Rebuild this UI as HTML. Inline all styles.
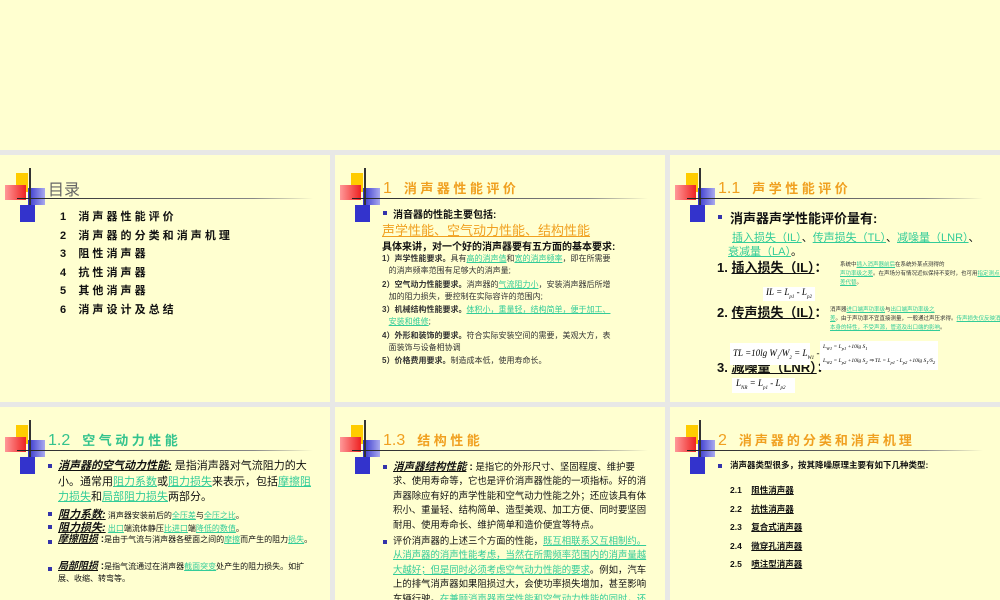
<!DOCTYPE html>
<html><head><meta charset="utf-8"><style>
*{margin:0;padding:0;box-sizing:border-box}
body{width:1000px;height:600px;overflow:hidden;background:#e8e8e6;position:relative;font-family:"Liberation Sans","Noto Sans CJK SC",sans-serif;color:#111}
.s{position:absolute;background:#ffffd0;overflow:hidden}
.a{position:absolute;white-space:nowrap}
.y{position:absolute;left:16px;top:18px;width:12px;height:19px;background:#ffcc00}
.r{position:absolute;left:5px;top:30px;width:21px;height:15px;background:linear-gradient(90deg,#ff9999,#ee2222)}
.b1{position:absolute;left:28px;top:33px;width:17px;height:17px;background:linear-gradient(90deg,#3333cc,#aaaaee)}
.b2{position:absolute;left:20px;top:50px;width:15px;height:17px;background:#3333cc}
.vl{position:absolute;left:29px;top:13px;width:2px;height:37px;background:#333}
.hl{position:absolute;left:17px;top:43px;width:296px;height:1px;background:linear-gradient(90deg,#222,#888 80%,rgba(0,0,0,0))}
.t{position:absolute;left:48px;top:23px;font-size:13px;white-space:nowrap;font-weight:bold;letter-spacing:3.5px}
.t .n{font-weight:normal;font-size:16px;letter-spacing:0;margin-right:12px}
.or{color:#f0a020}.gr{color:#33c38d}
.bu{position:absolute;width:4px;height:4px;background:#3333aa}
.g{color:#33cc99;text-decoration:underline}
.f{background:#fff;position:absolute;font-family:"Liberation Serif",serif;font-style:italic;color:#000;white-space:nowrap}
</style></head><body>
<div class="s" style="left:0;top:0;width:1000px;height:150px"></div>

<!-- slide 1 -->
<div class="s" style="left:0;top:155px;width:330px;height:247px">
<div class="y"></div><div class="r"></div><div class="b1"></div><div class="b2"></div><div class="vl"></div><div class="hl"></div>
<div class="t" style="color:#666;font-weight:normal;font-size:16px;top:21px;letter-spacing:0">目录</div>
<div style="position:absolute;left:60px;top:53px;font-size:11px;line-height:18.6px;font-weight:bold">
<div>1&nbsp;&nbsp;&nbsp; 消 声 器 性 能 评 价</div>
<div>2&nbsp;&nbsp;&nbsp; 消 声 器 的 分 类 和 消 声 机 理</div>
<div>3&nbsp;&nbsp;&nbsp; 阻 性 消 声 器</div>
<div>4&nbsp;&nbsp;&nbsp; 抗 性 消 声 器</div>
<div>5&nbsp;&nbsp;&nbsp; 其 他 消 声 器</div>
<div>6&nbsp;&nbsp;&nbsp; 消 声 设 计 及 总 结</div>
</div></div>

<!-- slide 2 -->
<div class="s" style="left:335px;top:155px;width:330px;height:247px">
<div class="y"></div><div class="r"></div><div class="b1"></div><div class="b2"></div><div class="vl"></div><div class="hl"></div>
<div class="t or"><span class="n">1</span>消声器性能评价</div>
<div class="bu" style="left:48px;top:56px"></div>
<div class="a" style="left:58px;top:51px;font-size:10px;font-weight:bold">消音器的性能主要包括:</div>
<div class="a or" style="left:47px;top:65px;font-size:13px;text-decoration:underline">声学性能、空气动力性能、结构性能</div>
<div class="a" style="left:47px;top:83px;font-size:10px;font-weight:bold">具体来讲，对一个好的消声器要有五方面的基本要求:</div>
<div style="position:absolute;left:47px;top:98px;width:265px;font-size:8px;line-height:12.3px;color:#333">
<div style="margin-bottom:1px"><b>1）声学性能要求。</b>具有<span class="g">高的消声值</span>和<span class="g">宽的消声频率</span>，即在所需要<br>&nbsp;&nbsp;&nbsp;的消声频率范围有足够大的消声量;</div>
<div style="margin-bottom:1px"><b>2）空气动力性能要求。</b>消声器的<span class="g">气流阻力小</span>，安装消声器后所增<br>&nbsp;&nbsp;&nbsp;加的阻力损失，要控制在实际容许的范围内;</div>
<div style="margin-bottom:1px"><b>3）机械结构性能要求。</b><span class="g">体积小，重量轻，结构简单，便于加工、</span><br>&nbsp;&nbsp;&nbsp;<span class="g">安装和维修</span>;</div>
<div style="margin-bottom:1px"><b>4）外形和装饰的要求。</b>符合实际安装空间的需要，美观大方，表<br>&nbsp;&nbsp;&nbsp;面装饰与设备相协调</div>
<div><b>5）价格费用要求。</b>制造成本低，使用寿命长。</div>
</div></div>

<!-- slide 3 -->
<div class="s" style="left:670px;top:155px;width:330px;height:247px">
<div class="y"></div><div class="r"></div><div class="b1"></div><div class="b2"></div><div class="vl"></div><div class="hl"></div>
<div class="t or"><span class="n">1.1</span>声学性能评价</div>
<div class="bu" style="left:48px;top:60px"></div>
<div class="a" style="left:60px;top:53px;font-size:13px;font-weight:bold">消声器声学性能评价量有:</div>
<div class="a" style="left:62px;top:74px;font-size:11px"><span class="g">插入损失（IL）</span>、<span class="g">传声损失（TL）</span>、<span class="g">减噪量（LNR）</span>、</div>
<div class="a" style="left:58px;top:88px;font-size:11px"><span class="g">衰减量（LA）</span>。</div>
<div class="a" style="left:47px;top:102px;font-size:13px;font-weight:bold">1. <u>插入损失（IL）</u>：</div>
<div class="a" style="left:170px;top:106px;font-size:5.5px;line-height:9px;color:#333">系统中<span class="g">插入消声器前后</span>在系统外某点测得的<br><span class="g">声功率级之差</span>。在声场分有情况近似保持不变时，也可用<span class="g">指定测点上声压级</span><br><span class="g">差代替</span>。</div>
<div class="f" style="left:93px;top:132px;width:52px;height:14px;font-size:9px;padding-left:3px">IL = L<sub style="font-size:5px">p1</sub> - L<sub style="font-size:5px">p2</sub></div>
<div class="a" style="left:47px;top:147px;font-size:13px;font-weight:bold">2. <u>传声损失（IL）</u>：</div>
<div class="a" style="left:160px;top:151px;font-size:5.5px;line-height:9px;color:#333">消声器<span class="g">进口端声功率级</span>与<span class="g">出口端声功率级之</span><br><span class="g">差</span>。由于声功率不宜直接测量，一般通过声压求得。<span class="g">传声损失仅反映消声器</span><br><span class="g">本身的特性，不受声源，管道及出口端的影响</span>。</div>
<div class="a" style="left:47px;top:202px;font-size:13px;font-weight:bold">3. <u>减噪量（LNR）</u>：</div>
<div class="f" style="left:60px;top:188px;width:80px;height:22px;font-size:9px;padding:5px 0 0 3px">TL =10lg W<sub style="font-size:5px">1</sub>/W<sub style="font-size:5px">2</sub> = L<sub style="font-size:5px">W1</sub> - L<sub style="font-size:5px">W2</sub></div>
<div class="f" style="left:150px;top:186px;width:118px;height:29px;font-size:5.5px;line-height:13px;padding-left:3px">L<sub>W1</sub> = L<sub>p1</sub> +10lg S<sub>1</sub><br>L<sub>W2</sub> = L<sub>p2</sub> +10lg S<sub>2</sub> ⇒ TL = L<sub>p1</sub> - L<sub>p2</sub> +10lg S<sub>1</sub>/S<sub>2</sub></div>
<div class="f" style="left:62px;top:223px;width:63px;height:15px;font-size:9px;padding-left:4px">L<sub style="font-size:5px">NR</sub> = L<sub style="font-size:5px">p1</sub> - L<sub style="font-size:5px">p2</sub></div>
</div>

<!-- slide 4 -->
<div class="s" style="left:0;top:407px;width:330px;height:193px">
<div class="y"></div><div class="r"></div><div class="b1"></div><div class="b2"></div><div class="vl"></div><div class="hl"></div>
<div class="t gr"><span class="n">1.2</span>空气动力性能</div>
<div class="bu" style="left:48px;top:57px"></div>
<div style="position:absolute;left:58px;top:52px;width:255px;font-size:11px;line-height:15.5px"><b><i><u>消声器的空气动力性能:</u></i></b> 是指消声器对气流阻力的大小。通常用<span class="g">阻力系数</span>或<span class="g">阻力损失</span>来表示，包括<span class="g">摩擦阻力损失</span>和<span class="g">局部阻力损失</span>两部分。</div>
<div class="bu" style="left:48px;top:105px"></div>
<div class="a" style="left:58px;top:99px;font-size:8px"><b style="font-size:11px"><i><u>阻力系数:</u></i></b> 消声器安装前后的<span class="g">全压差</span>与<span class="g">全压之比</span>。</div>
<div class="bu" style="left:48px;top:118px"></div>
<div class="a" style="left:58px;top:112px;font-size:8px"><b style="font-size:11px"><i><u>阻力损失:</u></i></b> <span class="g">出口</span>端流体静压<span class="g">比进口</span>端<span class="g">降低的数值</span>。</div>
<div class="bu" style="left:48px;top:133px"></div>
<div style="position:absolute;left:58px;top:127px;width:260px;font-size:8px;line-height:12px"><b style="font-size:10px"><i><u>摩擦阻损</u></i> :</b>是由于气流与消声器各壁面之间的<span class="g">摩擦</span>而产生的阻力<span class="g">损失</span>。</div>
<div class="bu" style="left:48px;top:160px"></div>
<div style="position:absolute;left:58px;top:154px;width:260px;font-size:8px;line-height:12px"><b style="font-size:10px"><i><u>局部阻损</u></i> :</b>是指气流通过在消声器<span class="g">截面突变</span>处产生的阻力损失。如扩展、收缩、转弯等。</div>
</div>

<!-- slide 5 -->
<div class="s" style="left:335px;top:407px;width:330px;height:193px">
<div class="y"></div><div class="r"></div><div class="b1"></div><div class="b2"></div><div class="vl"></div><div class="hl"></div>
<div class="t or"><span class="n">1.3</span>结构性能</div>
<div class="bu" style="left:48px;top:58px"></div>
<div style="position:absolute;left:58px;top:53px;width:258px;font-size:9.4px;line-height:14.4px"><b style="font-size:10.5px"><i><u>消声器结构性能</u></i> :</b> 是指它的外形尺寸、坚固程度、维护要求、使用寿命等，它也是评价消声器性能的一项指标。好的消声器除应有好的声学性能和空气动力性能之外；还应该具有体积小、重量轻、结构简单、造型美观、加工方便、同时要坚固耐用、使用寿命长、维护简单和造价便宜等特点。</div>
<div class="bu" style="left:48px;top:133px"></div>
<div style="position:absolute;left:58px;top:127px;width:258px;font-size:9.4px;line-height:14.4px">评价消声器的上述三个方面的性能，<span class="g">既互相联系又互相制约。从消声器的消声性能考虑，当然在所需频率范围内的消声量越大越好；但是同时必须考虑空气动力性能的要求</span>。例如，汽车上的排气消声器如果阻损过大，会使功率损失增加，甚至影响车辆行驶。<span class="g">在兼顾消声器声学性能和空气动力性能的同时，还必须考虑结构性能的要求，不但要耐用，还应避免体积过大、安装困难等情况</span>。在实际运用中，对这三方面的性能要求，应根据具体情况</div>
</div>

<!-- slide 6 -->
<div class="s" style="left:670px;top:407px;width:330px;height:193px">
<div class="y"></div><div class="r"></div><div class="b1"></div><div class="b2"></div><div class="vl"></div><div class="hl"></div>
<div class="t or" style="letter-spacing:3px"><span class="n">2</span>消声器的分类和消声机理</div>
<div class="bu" style="left:48px;top:57px"></div>
<div class="a" style="left:60px;top:52px;font-size:8.5px;font-weight:bold">消声器类型很多，按其降噪原理主要有如下几种类型:</div>
<div style="position:absolute;left:60px;top:74px;font-size:8.5px;line-height:18.5px;font-weight:bold">
<div>2.1&nbsp;&nbsp;&nbsp; <u>阻性消声器</u></div>
<div>2.2&nbsp;&nbsp;&nbsp; <u>抗性消声器</u></div>
<div>2.3&nbsp;&nbsp;&nbsp; <u>复合式消声器</u></div>
<div>2.4&nbsp;&nbsp;&nbsp; <u>微穿孔消声器</u></div>
<div>2.5&nbsp;&nbsp;&nbsp; <u>喷注型消声器</u></div>
</div></div>
</body></html>
